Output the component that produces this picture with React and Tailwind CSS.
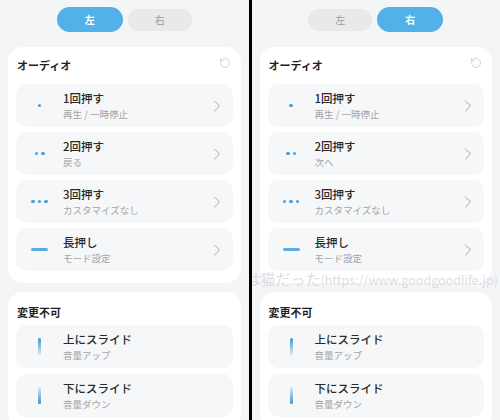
import React from 'react';
import { ChevronRight, RotateCcw } from 'lucide-react';

const font = { fontFamily: '"Noto Sans CJK JP", "Noto Sans", sans-serif' };

const Dots = ({ n }) => (
  <div className="flex gap-[3px]">
    {Array.from({ length: n }).map((_, i) => (
      <span key={i} className="w-[3.5px] h-[3.5px] rounded-full bg-[#4a9fd2]" />
    ))}
  </div>
);

const icons = {
  one: <Dots n={1} />,
  two: <Dots n={2} />,
  three: <Dots n={3} />,
  long: <span className="w-[17px] h-[3px] rounded-full bg-[#5aaede]" />,
  up: <span className="w-[3px] h-[17px] rounded-full bg-gradient-to-b from-[#3d95cf] to-[#d6ecf8]" />,
  down: <span className="w-[3px] h-[17px] rounded-full bg-gradient-to-b from-[#d6ecf8] to-[#3d95cf]" />,
};

const Row = ({ icon, title, sub, arrow = true }) => (
  <div className="h-[43px] rounded-[11px] bg-[#f6f7f9] flex items-center">
    <div className="w-[47px] flex justify-center">{icons[icon]}</div>
    <div className="flex-1 flex flex-col">
      <span className="text-[11.5px] leading-[15px] font-medium text-[#2a2a2a]">{title}</span>
      <span className="text-[9.5px] leading-[13px] text-[#a3a3a3] mt-[2px]">{sub}</span>
    </div>
    {arrow && <ChevronRight size={20} strokeWidth={1.2} className="text-[#a8a8a8] mr-[6px]" />}
  </div>
);

const Panel = ({ side }) => (
  <div className="relative flex-1 flex flex-col bg-[#f4f5f7] overflow-hidden px-[8px]">
    <div className="flex justify-center items-center gap-[5px] h-[25px] mt-[7px]">
      {['左', '右'].map(s =>
        s === side ? (
          <div key={s} className="w-[66px] h-[25px] rounded-full bg-[#52b2e8] text-white text-[10px] font-bold flex items-center justify-center">{s}</div>
        ) : (
          <div key={s} className="w-[64px] h-[22px] rounded-full bg-[#e8e9eb] text-[#9a9a9a] text-[10px] flex items-center justify-center">{s}</div>
        )
      )}
    </div>

    {/* Audio card */}
    <div className="mt-[15px] bg-white rounded-[15px] px-[8px] pt-[11px] pb-[12px]">
      <div className="flex items-center justify-between h-[14px] px-[1px] mb-[12px]">
        <span className="text-[11px] font-bold text-[#1f1f1f]">オーディオ</span>
        <RotateCcw size={12} strokeWidth={1.3} className="text-[#bdbdbd] mr-[1px] -mt-[4px]" />
      </div>
      <div className="flex flex-col gap-[5px]">
        <Row icon="one" title="1回押す" sub="再生 / 一時停止" />
        <Row icon="two" title="2回押す" sub={side === '左' ? '戻る' : '次へ'} />
        <Row icon="three" title="3回押す" sub="カスタマイズなし" />
        <Row icon="long" title="長押し" sub="モード設定" />
      </div>
    </div>

    {/* Fixed card */}
    <div className="mt-[9px] bg-white rounded-[15px] px-[8px] pt-[13px] pb-[12px]">
      <div className="h-[14px] px-[1px] mb-[6px] flex items-center">
        <span className="text-[11px] font-bold text-[#1f1f1f]">変更不可</span>
      </div>
      <div className="flex flex-col gap-[6px]">
        <Row icon="up" title="上にスライド" sub="音量アップ" arrow={false} />
        <Row icon="down" title="下にスライド" sub="音量ダウン" arrow={false} />
      </div>
    </div>

    {side === '右' && (
      <div className="absolute right-[2px] top-[268px] whitespace-nowrap leading-[20px] text-[#d4d6da]/80">
        <span className="text-[15px]">僕は猫だった</span>
        <span className="text-[12.5px]">(https://www.goodgoodlife.jp)</span>
      </div>
    )}
  </div>
);

export default function App() {
  return (
    <div className="w-[500px] h-[420px] flex overflow-hidden" style={font}>
      <Panel side="左" />
      <div className="w-[3px] bg-black" />
      <Panel side="右" />
    </div>
  );
}
